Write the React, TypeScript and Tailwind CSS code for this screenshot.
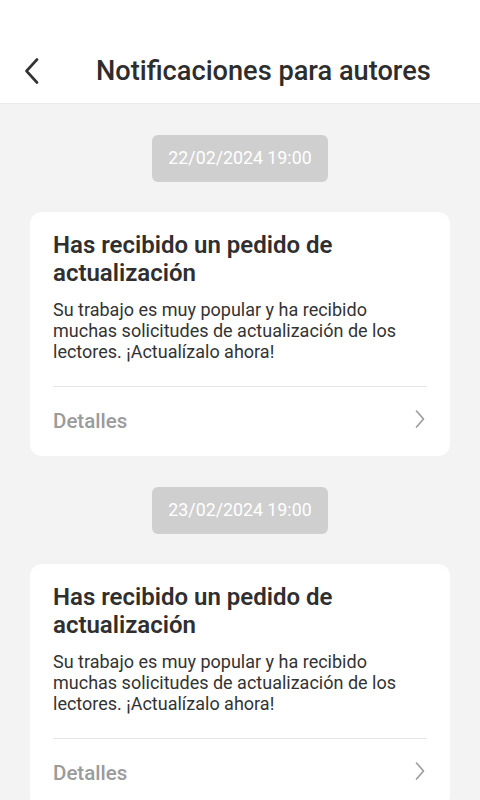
import React from 'react';

const notifications = [
  { date: '22/02/2024 19:00' },
  { date: '23/02/2024 19:00' },
];

const BackIcon = () => (
  <svg width="16" height="26" viewBox="0 0 16 26" fill="none">
    <path d="M13 1.5 L2.5 13 L13 24.5" stroke="#333333" strokeWidth="2.6" strokeLinecap="round" strokeLinejoin="round" />
  </svg>
);

const ChevronRight = () => (
  <svg width="10" height="18" viewBox="0 0 10 18" fill="none">
    <path d="M1.5 1 L8.5 9 L1.5 17" stroke="#9a9a9a" strokeWidth="1.6" strokeLinecap="round" strokeLinejoin="round" />
  </svg>
);

const NotificationCard: React.FC<{ date: string }> = ({ date }) => (
  <div className="flex flex-col items-center">
    <div className="mt-[31px] flex h-[47px] w-[176px] items-center justify-center rounded-md bg-[#cfcfcf] text-[17.8px] text-white">
      {date}
    </div>
    <div className="mt-[30px] w-[420px] rounded-xl bg-white px-[23px]">
      <h2 className="pt-[19px] text-[24px] font-semibold leading-[28px] text-[#2f2f2f]">
        Has recibido un pedido de actualización
      </h2>
      <p className="mt-[12px] text-[18px] leading-[21px] text-[#333333]">
        Su trabajo es muy popular y ha recibido muchas solicitudes de actualización de los lectores. ¡Actualízalo ahora!
      </p>
      <div className="mt-[24px] border-t border-[#e6e6e6]" />
      <div className="flex h-[69px] items-center justify-between pb-[1px]">
        <span className="text-[20.5px] font-medium text-[#9b9b9b]">Detalles</span>
        <span className="-mt-[4px] mr-[2px]"><ChevronRight /></span>
      </div>
    </div>
  </div>
);

export default function App() {
  return (
    <div className="min-h-[800px] bg-[#f3f3f3] font-['Roboto',sans-serif]">
      <div className="flex h-[104px] items-end border-b border-[#ebebeb] bg-white pb-[14px]">
        <div className="flex w-full items-center">
          <div className="ml-[24px] flex w-[16px] items-center"><BackIcon /></div>
          <h1 className="ml-[56px] text-[27.2px] font-medium leading-[36px] text-[#2d2d2d]">
            Notificaciones para autores
          </h1>
        </div>
      </div>
      {notifications.map((n, i) => (
        <NotificationCard key={i} date={n.date} />
      ))}
    </div>
  );
}
